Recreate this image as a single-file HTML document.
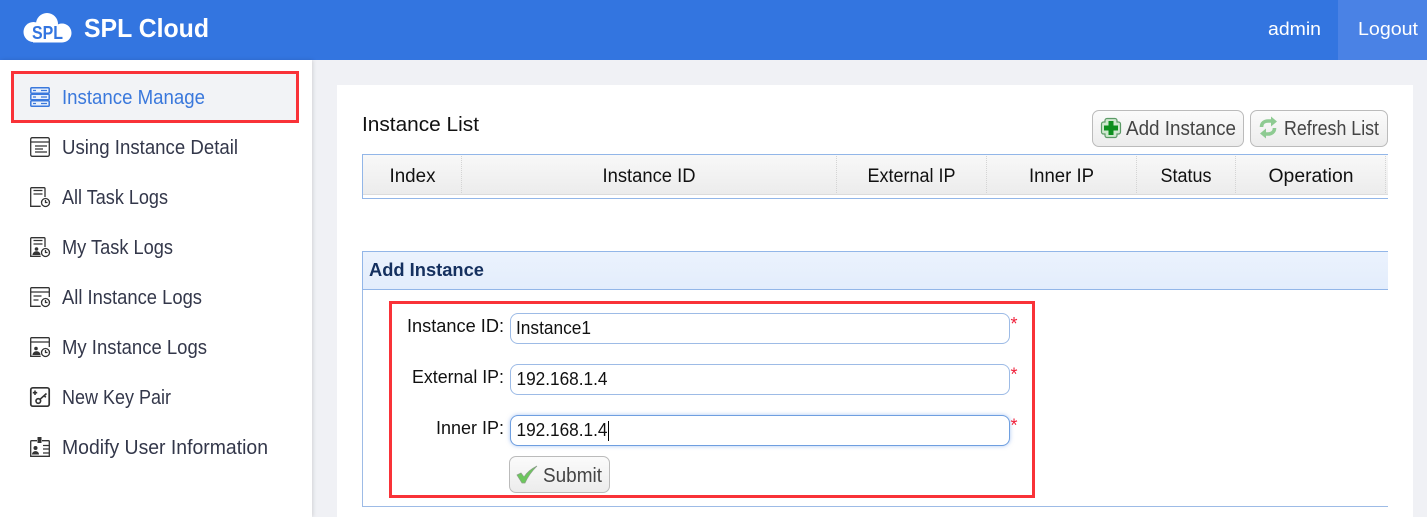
<!DOCTYPE html>
<html lang="en"><head><meta charset="utf-8"><title>SPL Cloud</title>
<style>
html,body{margin:0;padding:0;width:1427px;height:517px;overflow:hidden;background:#f0f1f5;font-family:"Liberation Sans",sans-serif}
.a{position:absolute;box-sizing:border-box}
.btn{border:1px solid #bbb;border-radius:7px;background:linear-gradient(#fbfbfb,#ececec)}
.inp{left:510px;width:500px;height:31px;border:1px solid #9dbbe6;border-radius:8px;background:#fff}
.sep{top:156px;height:37px;width:0;border-left:1px dotted #d4d4d4}
svg{position:absolute;left:0;top:0}
text{font-family:"Liberation Sans",sans-serif}
</style></head><body>
<div class="a" style="left:0;top:0;width:1427px;height:60px;background:#3375e0"></div>
<div class="a" style="left:1338px;top:0;width:89px;height:60px;background:#4a82e5"></div>
<div class="a" style="left:0;top:60px;width:312px;height:457px;background:#fff;box-shadow:1px 0 4px rgba(0,0,0,.13)"></div>
<div class="a" style="left:11px;top:71px;width:288px;height:52px;border:3px solid #f93238;background:#f2f3f6"></div>
<div class="a" style="left:337px;top:85px;width:1076px;height:432px;background:#fff"></div>

<div class="a btn" style="left:1092px;top:110px;width:152px;height:37px"></div>
<div class="a btn" style="left:1250px;top:110px;width:138px;height:37px"></div>

<div class="a" style="left:362px;top:154px;width:1026px;height:45px;border:1px solid #92b6e8;border-right:0;background:#fff"></div>
<div class="a" style="left:363px;top:155px;width:1025px;height:40px;background:linear-gradient(#f8f8f8,#ececec);border-bottom:1px solid #dcdcdc"></div>
<div class="a sep" style="left:461px"></div><div class="a sep" style="left:836px"></div><div class="a sep" style="left:986px"></div><div class="a sep" style="left:1136px"></div><div class="a sep" style="left:1235px"></div><div class="a sep" style="left:1385px"></div>

<div class="a" style="left:362px;top:251px;width:1026px;height:256px;border:1px solid #9dbbe6;border-right:0;background:#fff"></div>
<div class="a" style="left:362px;top:251px;width:1026px;height:39px;border:1px solid #92b6e8;border-right:0;background:linear-gradient(#ebf2fd,#e3edfc)"></div>

<div class="a" style="left:389px;top:301px;width:646px;height:197px;border:3px solid #f93238"></div>
<div class="a inp" style="top:313px"></div>
<div class="a inp" style="top:364px"></div>
<div class="a inp" style="top:415px;border-color:#6f9fe0;box-shadow:0 0 4px rgba(100,150,230,.55)"></div>
<div class="a" style="left:608px;top:421px;width:1px;height:20px;background:#000"></div>
<div class="a btn" style="left:509px;top:456px;width:101px;height:37px"></div>

<svg width="1427" height="517" viewBox="0 0 1427 517">
<!-- logo -->
<g fill="#fff"><circle cx="47" cy="24" r="11"/><circle cx="33.500" cy="32" r="10"/><circle cx="62" cy="33" r="9.500"/><rect x="33" y="28" width="29" height="14.500"/></g>
<text x="32" y="39" font-size="18" font-weight="700" fill="#3375e0" textLength="31" lengthAdjust="spacingAndGlyphs">SPL</text>
<text x="84" y="37" font-size="26" font-weight="700" fill="#fff" textLength="125" lengthAdjust="spacingAndGlyphs">SPL Cloud</text>
<text x="1268" y="35" font-size="18" fill="#fff" textLength="53" lengthAdjust="spacingAndGlyphs">admin</text>
<text x="1358" y="35" font-size="18" fill="#fff" textLength="60" lengthAdjust="spacingAndGlyphs">Logout</text>

<!-- sidebar icons -->
<g fill="#eaf1fc" stroke="#3a78dc" stroke-width="1.500">
<rect x="30.800" y="87.800" width="18.400" height="5.400" rx="1"/><rect x="30.800" y="94.300" width="18.400" height="5.400" rx="1"/><rect x="30.800" y="100.800" width="18.400" height="5.400" rx="1"/>
<path d="M33 90.500h3M41 90.500h6M33 97h3M41 97h6M33 103.500h3M41 103.500h6" stroke-width="1.200"/>
</g>
<g fill="none" stroke="#333" stroke-width="1.300">
<rect x="30.700" y="137.700" width="18.600" height="18.600" rx="1.500"/>
<path d="M31 142h18M35 146h12M35 149h8M35 152h12"/>

<g transform="translate(0 187)"><path d="M45 10V1.500a.8.8 0 0 0-.8-.8H31.500a.8.8 0 0 0-.8.8V19.300h10"/><path d="M33.500 3.500h9M33.500 7h9"/><circle cx="45.500" cy="15.500" r="4"/><path d="M45.500 13v2.500h2"/></g>

<g transform="translate(0 237)"><path d="M45 10V1.500a.8.8 0 0 0-.8-.8H31.500a.8.8 0 0 0-.8.8V19.300h10"/><path d="M33.500 3.500h9M33.500 7h9"/><circle cx="45.500" cy="15.500" r="4"/><path d="M45.500 13v2.500h2"/><circle cx="36.500" cy="12" r="1.800" fill="#333" stroke="none"/><path d="M32.500 18c0-5 8-5 8 0z" fill="#333" stroke="none"/></g>

<g transform="translate(0 287)"><path d="M49.300 10V1.500a.8.8 0 0 0-.8-.8H31.500a.8.8 0 0 0-.8.8V19.300h10"/><path d="M31 5h18M33.500 9h8M33.500 13h5"/><circle cx="45.500" cy="15.500" r="4"/><path d="M45.500 13v2.500h2"/></g>

<g transform="translate(0 337)"><path d="M49.300 10V1.500a.8.8 0 0 0-.8-.8H31.500a.8.8 0 0 0-.8.8V19.300h10"/><path d="M31 5h18"/><circle cx="45.500" cy="15.500" r="4"/><path d="M45.500 13v2.500h2"/><circle cx="36" cy="11.500" r="1.800" fill="#333" stroke="none"/><path d="M32.500 18c0-5 8-5 8 0z" fill="#333" stroke="none"/></g>

<rect x="30.800" y="387.800" width="18.400" height="18.400" rx="2" stroke-width="1.700"/>
<circle cx="38.300" cy="401" r="2.300" stroke-width="1.600"/><path d="M40 399.300l6.500-5.800M44 395.500l1.800 1.800M35 390.500v4.500M32.800 392.700h4.400" stroke-width="1.600"/>

<path d="M37 440.700h-5.300a1 1 0 0 0-1 1V456.300h18.600V441.700a1 1 0 0 0-1-1H42"/><rect x="37.500" y="437" width="4" height="6" fill="#333" stroke="none"/>
<path d="M43 445.500h6M43 449h6M43 453h6"/>
</g>
<g fill="#333"><circle cx="35.500" cy="448" r="2"/><path d="M32 454.500c0-4.500 7-4.500 7 0z"/></g>

<g font-size="20" fill="#33374a">
<text x="62" y="104" fill="#3a78dc" textLength="143" lengthAdjust="spacingAndGlyphs">Instance Manage</text>
<text x="62" y="154" textLength="176" lengthAdjust="spacingAndGlyphs">Using Instance Detail</text>
<text x="62" y="204" textLength="106" lengthAdjust="spacingAndGlyphs">All Task Logs</text>
<text x="62" y="254" textLength="111" lengthAdjust="spacingAndGlyphs">My Task Logs</text>
<text x="62" y="304" textLength="140" lengthAdjust="spacingAndGlyphs">All Instance Logs</text>
<text x="62" y="354" textLength="145" lengthAdjust="spacingAndGlyphs">My Instance Logs</text>
<text x="62" y="404" textLength="109" lengthAdjust="spacingAndGlyphs">New Key Pair</text>
<text x="62" y="454" textLength="206" lengthAdjust="spacingAndGlyphs">Modify User Information</text>
</g>

<text x="362" y="131" font-size="20" fill="#111" textLength="117" lengthAdjust="spacingAndGlyphs">Instance List</text>

<!-- add icon -->
<path d="M1107 118.500h8a2 2 0 0 1 2 2v1.500h1.500a2 2 0 0 1 2 2v8a2 2 0 0 1-2 2H1117v1.500a2 2 0 0 1-2 2h-8a2 2 0 0 1-2-2V134h-1.500a2 2 0 0 1-2-2v-8a2 2 0 0 1 2-2h1.500v-1.500a2 2 0 0 1 2-2z" fill="#cfe8cf" stroke="#5b9a66" stroke-width="1.200"/>
<path d="M1108.500 121h5v4.500h4.500v5h-4.500v4.500h-5v-4.500h-4.500v-5h4.500z" fill="#0d8f1e"/>
<text x="1126" y="135" font-size="20" fill="#444" textLength="110" lengthAdjust="spacingAndGlyphs">Add Instance</text>
<!-- refresh icon -->
<g fill="none" stroke="#8ecb92" stroke-width="3.600"><path d="M1261.500 127c0-4 3-6 6.500-6h4"/><path d="M1274.500 128c0 4-3 6-6.500 6h-4"/></g>
<path d="M1271 116.500l6 5-6 5zM1266 128.500l-6 5 6 5z" fill="#8ecb92"/>
<text x="1284" y="135" font-size="20" fill="#444" textLength="95" lengthAdjust="spacingAndGlyphs">Refresh List</text>

<g font-size="19" fill="#111" text-anchor="middle">
<text x="412.500" y="182" textLength="46" lengthAdjust="spacingAndGlyphs">Index</text>
<text x="649" y="182" textLength="93" lengthAdjust="spacingAndGlyphs">Instance ID</text>
<text x="911.500" y="182" textLength="88" lengthAdjust="spacingAndGlyphs">External IP</text>
<text x="1061.500" y="182" textLength="65" lengthAdjust="spacingAndGlyphs">Inner IP</text>
<text x="1186" y="182" textLength="51" lengthAdjust="spacingAndGlyphs">Status</text>
<text x="1311" y="182" textLength="85" lengthAdjust="spacingAndGlyphs">Operation</text>
</g>

<text x="369" y="276" font-size="18" font-weight="700" fill="#15305f" textLength="115" lengthAdjust="spacingAndGlyphs">Add Instance</text>

<g font-size="18.500" fill="#111">
<text x="407" y="332" textLength="97" lengthAdjust="spacingAndGlyphs">Instance ID:</text>
<text x="412" y="383" textLength="92" lengthAdjust="spacingAndGlyphs">External IP:</text>
<text x="436" y="434" textLength="68" lengthAdjust="spacingAndGlyphs">Inner IP:</text>
<text x="516" y="334" textLength="75" lengthAdjust="spacingAndGlyphs">Instance1</text>
<text x="516.500" y="385" textLength="91" lengthAdjust="spacingAndGlyphs">192.168.1.4</text>
<text x="516.500" y="436" textLength="91" lengthAdjust="spacingAndGlyphs">192.168.1.4</text>
</g>
<g font-size="18" fill="#f0203a">
<text x="1010.500" y="330">*</text><text x="1010.500" y="380.500">*</text><text x="1010.500" y="431.500">*</text>
</g>
<path d="M517 475l4-2 3 4c3-5 7-8 13-11-5 5-9 10-12 17h-3z" fill="#6cc75c" stroke="#8aa088" stroke-width=".7"/>
<text x="543" y="482" font-size="20" fill="#444" textLength="59" lengthAdjust="spacingAndGlyphs">Submit</text>
</svg>
</body></html>
